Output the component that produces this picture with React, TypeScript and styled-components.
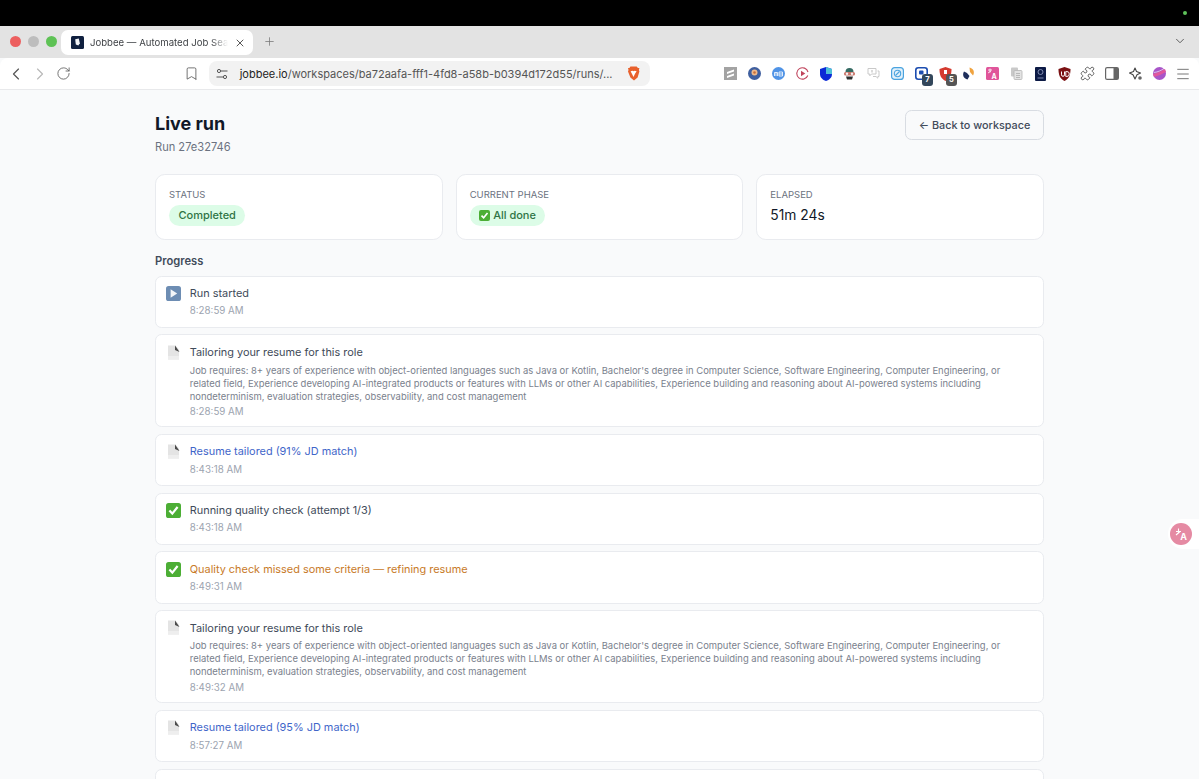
import styled, { createGlobalStyle } from 'styled-components';
import { ChevronDown, ChevronLeft, ChevronRight, Bookmark, Menu as MenuIcon, Plus, Puzzle, RotateCw, X } from 'lucide-react';
import type { ReactNode } from 'react';

const GlobalStyle = createGlobalStyle`
  html, body {
    margin: 0;
    height: 100%;
    overflow: hidden;
    background: #f9fafb;
    font-family: Inter, "Liberation Sans", sans-serif;
  }
  * {
    box-sizing: border-box;
  }
`;

const Screen = styled.div`
  height: 779px;
  display: flex;
  flex-direction: column;
  overflow: hidden;
`;

const MenuBar = styled.div`
  height: 26px;
  flex: none;
  background: #000;
  display: flex;
  justify-content: flex-end;
  align-items: flex-start;
  padding: 11px 12px 0 0;
`;

const CameraDot = styled.span`
  width: 4px;
  height: 4px;
  border-radius: 50%;
  background: #5fc25a;
`;

const TabStrip = styled.div`
  height: 32px;
  flex: none;
  background: #e3e3e3;
  display: flex;
  align-items: flex-end;
  padding-left: 10px;
`;

const Lights = styled.div`
  display: flex;
  gap: 7px;
  align-self: center;
  margin-top: -1px;
`;

const Light = styled.span<{ $color: string }>`
  width: 11px;
  height: 11px;
  border-radius: 50%;
  background: ${(props) => props.$color};
`;

const Tab = styled.div`
  width: 192px;
  height: 25px;
  margin: 0 0 3px 4px;
  background: #fff;
  border-radius: 7px;
  display: flex;
  align-items: center;
  padding: 0 7px 0 10px;
`;

const TabTitle = styled.span`
  width: 138px;
  margin-left: 6px;
  font-size: 9.6px;
  color: #3f4246;
  white-space: nowrap;
  overflow: hidden;
  -webkit-mask-image: linear-gradient(to right, #000 88%, transparent 100%);
  mask-image: linear-gradient(to right, #000 88%, transparent 100%);
`;

const TabClose = styled.span`
  margin-left: auto;
  display: flex;
  color: #444;
`;

const NewTab = styled.span`
  margin: 0 0 10px 10px;
  display: flex;
  color: #777;
`;

const StripEnd = styled.span`
  margin: 0 12px 10px auto;
  display: flex;
  color: #555;
`;

const Toolbar = styled.div`
  height: 32px;
  flex: none;
  background: #fff;
  border-radius: 8px 8px 0 0;
  border-bottom: 1px solid #e8e9eb;
  display: flex;
  align-items: center;
  padding: 0 4px;
  color: #555;
`;

const Slot = styled.span<{ $dim?: boolean }>`
  width: 23.8px;
  height: 24px;
  flex: none;
  display: flex;
  align-items: center;
  justify-content: center;
  position: relative;
  color: ${(props) => (props.$dim ? '#b9b9b9' : '#555')};
`;

const BookmarkSlot = styled(Slot)`
  margin-left: 104px;
`;

const ShieldSlot = styled(Slot)`
  margin-left: auto;
`;

const AddressPill = styled.div`
  width: 441px;
  height: 25px;
  margin-left: 6px;
  border-radius: 8px;
  background: #f2f2f2;
  display: flex;
  align-items: center;
  padding: 0 5px 0 7px;
`;

const Address = styled.span`
  margin-left: 11.5px;
  font-size: 11px;
  color: #555;
  white-space: nowrap;

  b {
    font-weight: 400;
    color: #222;
  }
`;

const Extensions = styled.div`
  display: flex;
  margin-left: auto;
`;

const Count = styled.span<{ $bg: string }>`
  position: absolute;
  right: 0;
  bottom: 0;
  width: 11.5px;
  height: 11.5px;
  border-radius: 3px;
  background: ${(props) => props.$bg};
  color: #fff;
  font-size: 7.5px;
  font-weight: 700;
  line-height: 11.5px;
  text-align: center;
`;

const Page = styled.main`
  flex: 1;
  min-height: 0;
  background: #f9fafb;
  padding: 20px 155px 0;
`;

const Header = styled.header`
  display: flex;
  justify-content: space-between;
  align-items: flex-start;
  margin-bottom: 18px;
`;

const Heading = styled.div`
  padding-top: 1px;
`;

const Title = styled.h1`
  margin: 0;
  font-size: 18px;
  line-height: 26px;
  font-weight: 700;
  color: #111827;
`;

const RunId = styled.div`
  margin-top: 2px;
  font-size: 11.1px;
  line-height: 17px;
  color: #6b7280;
`;

const BackButton = styled.button`
  height: 30px;
  width: 139px;
  padding: 1px 0 0;
  background: #f9fafb;
  border: 1px solid #d8dce2;
  border-radius: 6.5px;
  font: 500 10.8px Inter, "Liberation Sans", sans-serif;
  color: #414b5a;
`;

const Stats = styled.section`
  display: grid;
  grid-template-columns: repeat(3, 1fr);
  gap: 13px;
`;

const StatCard = styled.div`
  height: 66px;
  background: #fff;
  border: 1px solid #e9ebef;
  border-radius: 9.75px;
  padding: 12.5px 13px;
`;

const StatLabel = styled.div`
  font-size: 9.5px;
  line-height: 14px;
  color: #6b7280;
  text-transform: uppercase;
`;

const Pill = styled.span`
  display: inline-flex;
  align-items: center;
  gap: 3px;
  height: 21px;
  margin-top: 3px;
  padding: 0 9.5px;
  border-radius: 11px;
  background: #dcfce7;
  color: #2f7445;
  font-size: 11px;
  font-weight: 500;
`;

const Elapsed = styled.div`
  margin-top: 3px;
  font-size: 13.8px;
  line-height: 20px;
  color: #111827;
`;

const SectionTitle = styled.h2`
  margin: 13px 0 6.5px;
  font-size: 11.2px;
  line-height: 16px;
  font-weight: 600;
  color: #414b5a;
`;

const Feed = styled.div`
  display: flex;
  flex-direction: column;
  gap: 6.5px;
`;

const Entry = styled.article<{ $tall: boolean }>`
  flex: none;
  display: flex;
  gap: 9px;
  padding: 8.7px 9.75px ${(props) => (props.$tall ? '6.9px' : '7.9px')};
  background: #fff;
  border: 1px solid #e9ebef;
  border-radius: 6.5px;
`;

const EntryIcon = styled.span`
  flex: none;
  width: 15px;
  height: 16px;
  display: flex;
  align-items: center;
  justify-content: center;
`;

const tones = { default: '#414b5a', info: '#3f66c9', warn: '#c87a28' };
type Tone = keyof typeof tones;

const EntryTitle = styled.div<{ $tone: Tone }>`
  font-size: 10.9px;
  line-height: 17px;
  color: ${(props) => tones[props.$tone]};
`;

const EntryDetail = styled.div`
  margin: 2.5px 0 0.5px;
  font-size: 9.45px;
  line-height: 13px;
  color: #7a818d;
`;

const EntryTime = styled.div`
  margin-top: 2.2px;
  font-size: 9.75px;
  line-height: 14.6px;
  color: #9ca3af;
`;

const TranslateFloat = styled.div`
  position: fixed;
  right: 0;
  top: 519px;
  width: 31px;
  height: 30px;
  padding: 4px 0 0 2px;
  background: #fff;
  border-radius: 15px 0 0 15px;
`;

const TranslateBadge = styled.div`
  width: 22px;
  height: 22px;
  border-radius: 50%;
  background: #e58aa3;
  display: flex;
  align-items: center;
  justify-content: center;
`;

function FileEmoji() {
  return (
    <svg width="13" height="15" viewBox="0 0 13 15">
      <path d="M1 0.5h7.5l3.5 4v10H1z" fill="#e4e4e4" />
      <path d="M8 0.5v4.5l4.5 2z" fill="#4a4a4a" />
      <path d="M1 11h11v3.5H1z" fill="#eeeeee" />
    </svg>
  );
}

function CheckEmoji({ size = 15 }: { size?: number }) {
  return (
    <svg width={size} height={size} viewBox="0 0 15 15">
      <rect width="15" height="15" rx="2.6" fill="#4cae35" />
      <path d="M3.4 7.6l2.9 3 5.3-6.6" fill="none" stroke="#fff" strokeWidth="2.2" />
    </svg>
  );
}

function PlayEmoji() {
  return (
    <svg width="15" height="15" viewBox="0 0 15 15">
      <rect width="15" height="15" rx="2.6" fill="#6d8db3" />
      <path d="M4.6 3.2v8.6l6.6-4.3z" fill="#f4f6f8" />
    </svg>
  );
}

function Favicon() {
  return (
    <svg width="13" height="13" viewBox="0 0 13 13">
      <rect width="13" height="13" rx="1.5" fill="#10203f" />
      <path d="M4.2 3.2l3.6-.6 1 4.6-1.4 2.2-2.6-.8z" fill="#f2f4f7" />
    </svg>
  );
}

function TuneIcon() {
  return (
    <svg width="12" height="12" viewBox="0 0 12 12" fill="none" stroke="#555" strokeWidth="1">
      <circle cx="3" cy="3" r="1.6" />
      <path d="M5 3h6.5M.5 9H7" />
      <circle cx="9" cy="9" r="1.6" />
    </svg>
  );
}

function BraveIcon() {
  return (
    <svg width="13" height="15" viewBox="0 0 13 15">
      <path d="M3.4.6h6.2l1.4 1.5 1.4-.2-.5 2 .5 1.5-1.8 6.1-3.6 2.9-3.6-2.9L1 5.400l.5-1.500-.5-2 1.400.2z" fill="#e8602c" />
      <path d="M3.6 5.200l2-.5 1 .5 1-.5 2 .5-1.600 2.600L6.500 11 4.900 7.800z" fill="#fff" />
    </svg>
  );
}

const extensionIcons: ReactNode[] = [
  <svg key="a" width="13" height="13" viewBox="0 0 13 13">
    <rect width="13" height="13" fill="#a3a3a3" />
    <path d="M3 5l7-2.500v2L3 7zM3 9l7-2.500v2L3 11z" fill="#fff" />
  </svg>,
  <svg key="b" width="13" height="13" viewBox="0 0 13 13">
    <circle cx="6.500" cy="6.500" r="6.500" fill="#3f5f9f" />
    <circle cx="6.500" cy="5.500" r="3" fill="#f0b98a" />
    <circle cx="6.500" cy="5.500" r="1.300" fill="#c96f3a" />
  </svg>,
  <svg key="c" width="13" height="13" viewBox="0 0 13 13" fill="none">
    <circle cx="6.500" cy="6.500" r="6.500" fill="#4f93e6" />
    <path d="M2.500 9V5.500h3V9M4 5.500V9M7 5h3.500v4H7zM7 7h3.500" stroke="#fff" strokeWidth=".8" />
  </svg>,
  <svg key="d" width="13" height="13" viewBox="0 0 13 13" fill="none">
    <path d="M11.800 8.500A5.700 5.700 0 1 1 12 5" stroke="#c0455d" strokeWidth="1.100" />
    <path d="M5 3.800v5.400l4.300-2.700z" fill="#c0455d" />
  </svg>,
  <svg key="e" width="12" height="14" viewBox="0 0 12 14">
    <path d="M6 0l6 2v5c0 3.500-2.500 5.800-6 7-3.500-1.200-6-3.500-6-7V2z" fill="#0b2ad6" />
    <path d="M6 0l6 2v5H6z" fill="#4fc0d8" />
  </svg>,
  <svg key="f" width="13" height="13" viewBox="0 0 13 13">
    <path d="M2.500 5a4 4 0 0 1 8 0z" fill="#356b63" />
    <rect x="1" y="5" width="11" height="3.500" rx="1.500" fill="#c9756a" />
    <circle cx="4" cy="6.800" r="1.200" fill="#f4f4f4" />
    <circle cx="9" cy="6.800" r="1.200" fill="#f4f4f4" />
    <path d="M3 9.500h7l-1 3H4z" fill="#2f2f2f" />
  </svg>,
  <svg key="g" width="13" height="13" viewBox="0 0 13 13" fill="none" stroke="#c9c9c9">
    <path d="M1 1.500h8v5.500H4.500L2.800 8.800V7H1z" />
    <path d="M10.500 4H12v5.500h-1.200v1.700L9 9.500H6" />
    <path d="M5 3v2.500" stroke="#b5b5b5" />
  </svg>,
  <svg key="h" width="13" height="13" viewBox="0 0 13 13" fill="none">
    <rect x=".6" y=".6" width="11.800" height="11.800" rx="3" fill="#e2f1fb" stroke="#4aa3df" strokeWidth="1.200" />
    <circle cx="6.500" cy="6.500" r="3.200" stroke="#4aa3df" strokeWidth="1.100" />
    <path d="M4.500 8.500l4-4" stroke="#4aa3df" strokeWidth="1.100" />
  </svg>,
  <svg key="i" width="13" height="13" viewBox="0 0 13 13" fill="none">
    <rect x=".8" y=".8" width="11.400" height="11.400" rx="2.500" fill="#fff" stroke="#1c4db0" strokeWidth="1.600" />
    <rect x="4" y="3.500" width="4.500" height="4" rx="1" fill="#1c4db0" />
  </svg>,
  <svg key="j" width="13" height="14" viewBox="0 0 13 14">
    <path d="M6.500 0l6 2c0 5.500-1 9.500-6 12-5-2.500-6-6.500-6-12z" fill="#d43a2f" />
    <rect x="5" y="3" width="3" height="4" fill="#fff" />
  </svg>,
  <svg key="k" width="13" height="13" viewBox="0 0 13 13">
    <path d="M7.500.5c4 1 5.500 4.500 3.500 8l-3-3.500z" fill="#f0a33f" />
    <path d="M5.500 12.500c-4-1-5.500-4.500-3.500-8l3 1.500 2.500 3z" fill="#1f2f5c" />
  </svg>,
  <svg key="l" width="13" height="13" viewBox="0 0 13 13">
    <rect width="13" height="13" rx="1.500" fill="#e0559a" />
    <text x="8" y="11.500" fontSize="7" fontWeight="700" fill="#fff" textAnchor="middle" fontFamily="Inter">A</text>
    <path d="M2 3h4M4 1.500v4M2 6l3-2" stroke="#fff" strokeWidth=".8" fill="none" />
  </svg>,
  <svg key="m" width="13" height="13" viewBox="0 0 13 13">
    <rect x="1" y="0.500" width="7" height="9" rx="1" fill="#c9c9c9" />
    <rect x="4" y="3.500" width="8" height="9" rx="1" fill="#e3e3e3" stroke="#b5b5b5" strokeWidth=".8" />
    <path d="M6 6.500h4M6 8.500h4M6 10.500h4" stroke="#a5a5a5" strokeWidth=".7" />
  </svg>,
  <svg key="n" width="11" height="14" viewBox="0 0 11 14" fill="none">
    <rect width="11" height="14" rx="1" fill="#0c1a45" />
    <circle cx="5.500" cy="5" r="2.500" stroke="#9aa6c9" strokeWidth=".8" />
    <path d="M2.500 11h6" stroke="#9aa6c9" strokeWidth=".8" />
  </svg>,
  <svg key="o" width="13" height="14" viewBox="0 0 13 14" fill="none">
    <path d="M6.500 0l6 2c0 5.500-1 9.500-6 12-5-2.500-6-6.500-6-12z" fill="#7b1113" />
    <path d="M3.500 4.500v3.300a1.500 1.500 0 0 0 3 0V4.500M7.800 4.500h1a1.500 1.500 0 0 1 0 5h-1z" stroke="#fff" strokeWidth="1" />
  </svg>,
  <Puzzle key="p" size={15} strokeWidth={1.4} color="#444" />,
  <svg key="q" width="14" height="13" viewBox="0 0 14 13" fill="none">
    <rect x=".6" y=".6" width="12.800" height="11.800" rx="1.500" stroke="#666" strokeWidth="1.200" />
    <rect x="8.500" y="1" width="4.500" height="11" fill="#666" />
  </svg>,
  <svg key="r" width="14" height="14" viewBox="0 0 14 14" fill="none">
    <path d="M6 1l1.500 3.500L11.500 6 8 7.700 6 12 4 7.700.5 6l4-1.500z" stroke="#444" strokeWidth="1.100" strokeLinejoin="round" />
    <circle cx="11" cy="11" r="1.800" fill="#666" />
  </svg>,
  <svg key="s" width="13" height="13" viewBox="0 0 13 13">
    <circle cx="6.500" cy="6.500" r="6.500" fill="#a855c9" />
    <path d="M0 7c4-1 8-3 12-5l1 3c-4 2-8 4-12 5z" fill="#e0569c" />
    <path d="M1 5.500c4-.5 7-2 10-4" stroke="#fff" strokeWidth=".6" fill="none" />
  </svg>,
  <MenuIcon key="t" size={16} strokeWidth={1.2} color="#555" />,
];

const badges: Record<number, { text: string; bg: string }> = {
  8: { text: '7', bg: '#33475b' },
  9: { text: '5', bg: '#555555' },
};

const requirements =
  "Job requires: 8+ years of experience with object-oriented languages such as Java or Kotlin, Bachelor's degree in Computer Science, Software Engineering, Computer Engineering, or related field, Experience developing AI-integrated products or features with LLMs or other AI capabilities, Experience building and reasoning about AI-powered systems including nondeterminism, evaluation strategies, observability, and cost management";

interface RunEvent {
  icon: 'play' | 'file' | 'check';
  title: string;
  time: string;
  tone?: Tone;
  detail?: string;
}

const events: RunEvent[] = [
  { icon: 'play', title: 'Run started', time: '8:28:59 AM' },
  { icon: 'file', title: 'Tailoring your resume for this role', time: '8:28:59 AM', detail: requirements },
  { icon: 'file', title: 'Resume tailored (91% JD match)', time: '8:43:18 AM', tone: 'info' },
  { icon: 'check', title: 'Running quality check (attempt 1/3)', time: '8:43:18 AM' },
  { icon: 'check', title: 'Quality check missed some criteria — refining resume', time: '8:49:31 AM', tone: 'warn' },
  { icon: 'file', title: 'Tailoring your resume for this role', time: '8:49:32 AM', detail: requirements },
  { icon: 'file', title: 'Resume tailored (95% JD match)', time: '8:57:27 AM', tone: 'info' },
  { icon: 'check', title: 'Running quality check (attempt 2/3)', time: '8:57:27 AM' },
];

const eventIcons = {
  play: <PlayEmoji />,
  file: <FileEmoji />,
  check: <CheckEmoji />,
};

export default function App() {
  return (
    <Screen>
      <GlobalStyle />
      <MenuBar>
        <CameraDot />
      </MenuBar>
      <TabStrip>
        <Lights>
          <Light $color="#ec5f5f" />
          <Light $color="#bdbdbd" />
          <Light $color="#5ec255" />
        </Lights>
        <Tab>
          <Favicon />
          <TabTitle>Jobbee — Automated Job Search</TabTitle>
          <TabClose>
            <X size={12} strokeWidth={1.8} />
          </TabClose>
        </Tab>
        <NewTab>
          <Plus size={13} strokeWidth={1.4} />
        </NewTab>
        <StripEnd>
          <ChevronDown size={14} strokeWidth={1.6} />
        </StripEnd>
      </TabStrip>
      <Toolbar>
        <Slot>
          <ChevronLeft size={20} strokeWidth={1.4} />
        </Slot>
        <Slot $dim>
          <ChevronRight size={20} strokeWidth={1.4} />
        </Slot>
        <Slot>
          <RotateCw size={15} strokeWidth={1.3} />
        </Slot>
        <BookmarkSlot>
          <Bookmark size={15} strokeWidth={1.3} />
        </BookmarkSlot>
        <AddressPill>
          <TuneIcon />
          <Address>
            <b>jobbee.io</b>/workspaces/ba72aafa-fff1-4fd8-a58b-b0394d172d55/runs/...
          </Address>
          <ShieldSlot>
            <BraveIcon />
          </ShieldSlot>
        </AddressPill>
        <Extensions>
          {extensionIcons.map((icon, index) => (
            <Slot key={index}>
              {icon}
              {badges[index] && <Count $bg={badges[index].bg}>{badges[index].text}</Count>}
            </Slot>
          ))}
        </Extensions>
      </Toolbar>
      <Page>
        <Header>
          <Heading>
            <Title>Live run</Title>
            <RunId>Run 27e32746</RunId>
          </Heading>
          <BackButton>← Back to workspace</BackButton>
        </Header>
        <Stats>
          <StatCard>
            <StatLabel>Status</StatLabel>
            <Pill>Completed</Pill>
          </StatCard>
          <StatCard>
            <StatLabel>Current phase</StatLabel>
            <Pill>
              <CheckEmoji size={11} /> All done
            </Pill>
          </StatCard>
          <StatCard>
            <StatLabel>Elapsed</StatLabel>
            <Elapsed>51m 24s</Elapsed>
          </StatCard>
        </Stats>
        <SectionTitle>Progress</SectionTitle>
        <Feed>
          {events.map((event, index) => (
            <Entry key={index} $tall={Boolean(event.detail)}>
              <EntryIcon>{eventIcons[event.icon]}</EntryIcon>
              <div>
                <EntryTitle $tone={event.tone ?? 'default'}>{event.title}</EntryTitle>
                {event.detail && <EntryDetail>{event.detail}</EntryDetail>}
                <EntryTime>{event.time}</EntryTime>
              </div>
            </Entry>
          ))}
        </Feed>
      </Page>
      <TranslateFloat>
        <TranslateBadge>
          <svg width="16" height="16" viewBox="0 0 16 16" fill="none">
            <path d="M3 5.500h5M5.500 2.500v5M3 9l4-3.500" stroke="#fff" strokeWidth="1.100" />
            <text x="10.500" y="14" fontSize="9" fontWeight="700" fill="#fff" textAnchor="middle" fontFamily="Inter">A</text>
          </svg>
        </TranslateBadge>
      </TranslateFloat>
    </Screen>
  );
}
